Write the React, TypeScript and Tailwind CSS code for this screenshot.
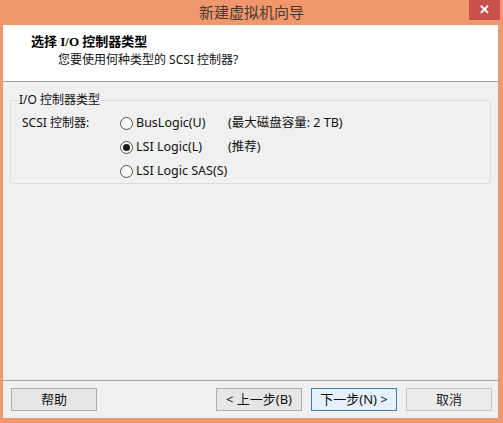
const cjk = '"Noto Sans", "Noto Sans CJK SC", sans-serif';

const Radio = ({ checked }: { checked?: boolean }) => (
  <span className="flex h-[13px] w-[13px] items-center justify-center rounded-full border border-[#555] bg-[#fbfbfb]">
    {checked && <span className="h-[7px] w-[7px] rounded-full bg-[#1a1a1a]" />}
  </span>
);

const options = [
  { label: 'BusLogic(U)', note: '(最大磁盘容量: 2 TB)' },
  { label: 'LSI Logic(L)', note: '(推荐)', checked: true },
  { label: 'LSI Logic SAS(S)', note: '' },
];

const WizButton = ({
  label,
  focused,
  dim,
}: {
  label: string;
  focused?: boolean;
  dim?: boolean;
}) => (
  <button
    className={
      'flex h-[23px] w-[86px] items-center justify-center border text-[13px] ' +
      (focused
        ? 'border-[#3c7fb1] bg-[#e6f0fa] text-[#111]'
        : dim
          ? 'border-[#c4c4c4] bg-[#ececec] text-[#222]'
          : 'border-[#adadad] bg-[#e6e6e6] text-[#111]')
    }
  >
    {label}
  </button>
);

export default function App() {
  return (
    <div
      className="flex h-[423px] w-[503px] flex-col bg-[#f0976e]"
      style={{ fontFamily: cjk }}
    >
      <div className="relative flex h-[25px] items-center justify-center">
        <span className="text-[15px] text-[#4a3a32]">新建虚拟机向导</span>
        <div className="absolute right-[3px] top-0 flex h-[20px] w-[31px] items-center justify-center bg-[#c9504c] text-[13px] font-bold text-white">
          ✕
        </div>
      </div>

      <div className="mb-[5px] ml-[3px] mr-[5px] flex flex-1 flex-col bg-[#f0f0f0]">
        <div className="flex h-[57px] flex-col border-b border-[#a0a0a0] bg-white pl-[28px] pt-[8px]">
          <div
            className="text-[13px] font-bold leading-[18px] text-black"
            style={{ fontFamily: '"Liberation Serif", "Noto Sans CJK SC", serif' }}
          >
            选择 I/O 控制器类型
          </div>
          <div className="pl-[27px] text-[12px] leading-[18px] text-[#111]">
            您要使用何种类型的 SCSI 控制器?
          </div>
        </div>

        <div className="flex-1 px-[7px] pt-[11px]">
          <fieldset className="h-[91px] rounded-[2px] border border-[#dcdcdc] px-[10px] pt-[4px]">
            <legend className="ml-[-3px] px-[1px] text-[12px] leading-[14px] text-[#111]">
              I/O 控制器类型
            </legend>
            <div className="flex text-[12px] text-[#111]">
              <div className="w-[99px] pl-[1px] leading-[23px]">SCSI 控制器:</div>
              <div className="flex flex-col">
                {options.map((o) => (
                  <div key={o.label} className="flex h-[24px] items-center">
                    <Radio checked={o.checked} />
                    <span className="ml-[3px] w-[92px] text-[12.5px]">{o.label}</span>
                    <span className="text-[12.5px]">{o.note}</span>
                  </div>
                ))}
              </div>
            </div>
          </fieldset>
        </div>

        <div className="flex h-[38px] items-center border-t border-[#a0a0a0] pl-[8px] pr-[6px]">
          <WizButton label="帮助" />
          <div className="ml-auto flex gap-[9px]">
            <WizButton label="< 上一步(B)" />
            <WizButton label="下一步(N) >" focused />
            <WizButton label="取消" dim />
          </div>
        </div>
      </div>
    </div>
  );
}
